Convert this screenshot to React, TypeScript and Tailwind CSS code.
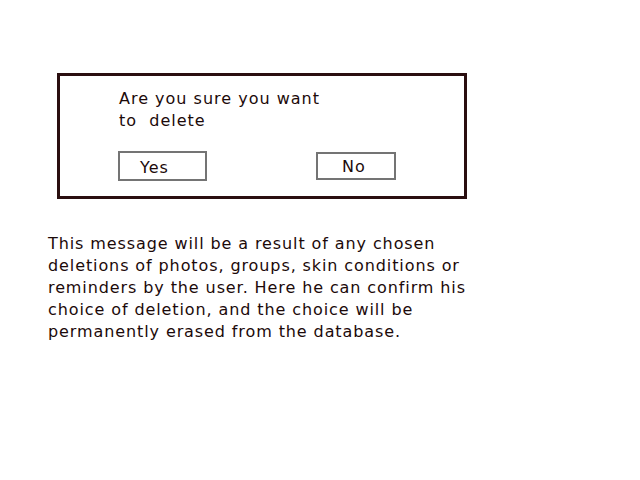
export default function App() {
  return (
    <div className="w-[640px] h-[480px] bg-white text-[#1c0a0a]" style={{ fontFamily: '"DejaVu Sans", sans-serif' }}>
      <div className="pt-[73px] pl-[57px]">
        <div className="w-[410px] h-[126px] border-[3px] border-[#2a0f10] pl-[59px] pt-[12px]">
          <div className="text-[16px] leading-[22px] tracking-[1px]">
            <div>Are you sure you want</div>
            <div>to&nbsp; delete</div>
          </div>
          <div className="flex items-start mt-[19px]">
            <div className="w-[89px] h-[30px] border-2 border-[#747474] ml-[-1px] pl-[20px] pt-[5px] text-[16px] leading-[20px] tracking-[1px]">Yes</div>
            <div className="w-[80px] h-[28px] border-2 border-[#747474] ml-[109px] mt-[1px] pl-[24px] pt-[3px] text-[16px] leading-[20px] tracking-[1px]">No</div>
          </div>
        </div>
      </div>
      <div className="pl-[48px] pt-[34px] text-[16px] leading-[22px] tracking-[0.9px] w-[480px]">
        This message will be a result of any chosen<br />
        deletions of photos, groups, skin conditions or<br />
        reminders by the user. Here he can confirm his<br />
        choice of deletion, and the choice will be<br />
        permanently erased from the database.
      </div>
    </div>
  );
}
